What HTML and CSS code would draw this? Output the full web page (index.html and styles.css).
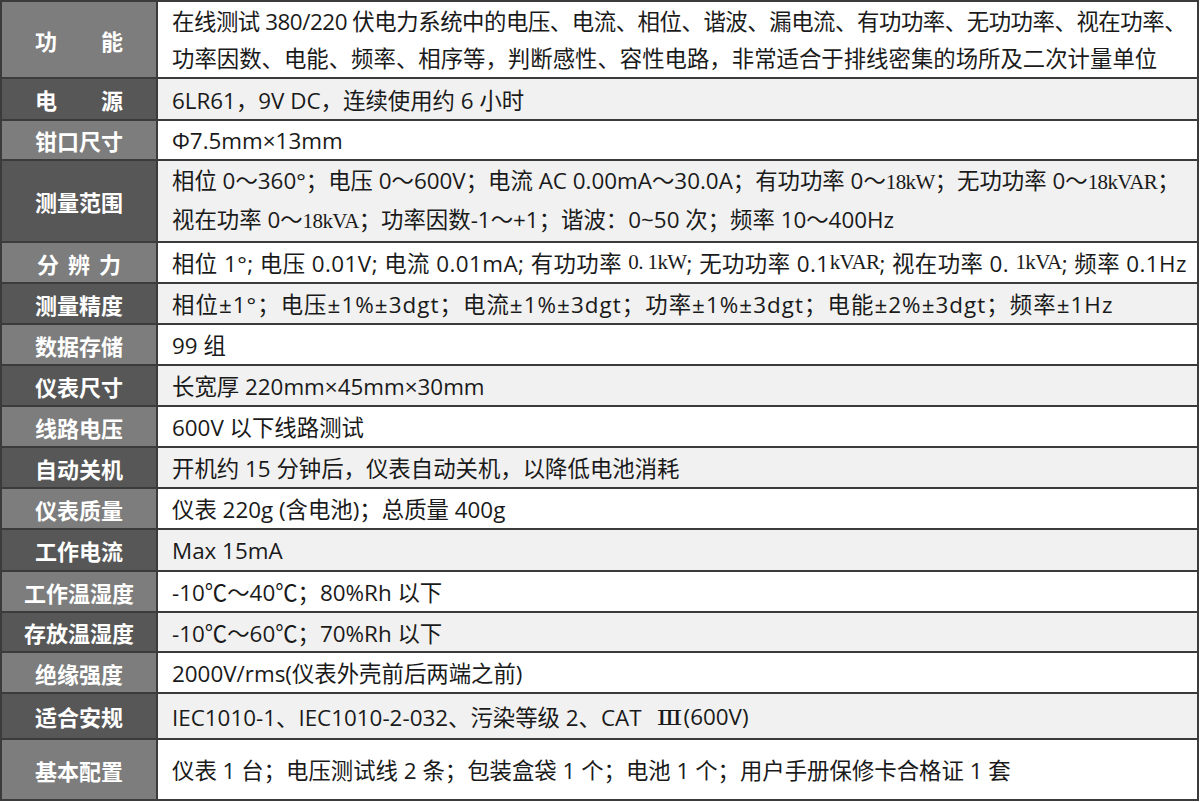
FILE: index.html
```html
<!DOCTYPE html>
<html lang="zh-CN">
<head>
<meta charset="utf-8">
<title>技术参数</title>
<link rel="stylesheet" href="styles.css">
</head>
<body>
<div class="sheet">
  <div class="lab odd h77">功　　能</div>
  <div class="val odd h77 two"><span class="tight">在线测试 380/220 伏电力系统中的电压、电流、相位、谐波、漏电流、有功功率、无功功率、视在功率、</span><br>功率因数、电能、频率、相序等，判断感性、容性电路，非常适合于排线密集的场所及二次计量单位</div>

  <div class="lab even h42">电　　源</div>
  <div class="val even h42">6LR61，9V DC，连续使用约 6 小时</div>

  <div class="lab odd h40">钳口尺寸</div>
  <div class="val odd h40">Φ7.5mm×13mm</div>

  <div class="lab even h82">测量范围</div>
  <div class="val even h82 two">相位 0～360°；电压 0～600V；电流 AC 0.00mA～30.0A；有功功率 0～<span class="sf">18kW</span>；无功功率 0～<span class="sf">18kVAR</span>；<br>视在功率 0～<span class="sf">18kVA</span>；功率因数-1～+1；谐波：0~50 次；频率 10～400Hz</div>

  <div class="lab odd h41 spaced">分 辨 力</div>
  <div class="val odd h41 loose">相位 1°; 电压 0.01V; 电流 0.01mA; 有功功率&nbsp;<span class="sf">0. 1kW</span>; 无功功率 0.1<span class="sf">kVAR</span>; 视在功率 0.&nbsp;<span class="sf">1kVA</span>; 频率 0.1Hz</div>

  <div class="lab even h41">测量精度</div>
  <div class="val even h41 looser">相位±1°；电压±1%±3dgt；电流±1%±3dgt；功率±1%±3dgt；电能±2%±3dgt；频率±1Hz</div>

  <div class="lab odd h41">数据存储</div>
  <div class="val odd h41">99 组</div>

  <div class="lab even h41">仪表尺寸</div>
  <div class="val even h41">长宽厚 220mm×45mm×30mm</div>

  <div class="lab odd h41">线路电压</div>
  <div class="val odd h41">600V 以下线路测试</div>

  <div class="lab even h41">自动关机</div>
  <div class="val even h41">开机约 15 分钟后，仪表自动关机，以降低电池消耗</div>

  <div class="lab odd h41">仪表质量</div>
  <div class="val odd h41">仪表 220g (含电池)；总质量 400g</div>

  <div class="lab even h42">工作电流</div>
  <div class="val even h42">Max 15mA</div>

  <div class="lab odd h41">工作温湿度</div>
  <div class="val odd h41">-10℃～40℃；80%Rh 以下</div>

  <div class="lab even h40">存放温湿度</div>
  <div class="val even h40">-10℃～60℃；70%Rh 以下</div>

  <div class="lab odd h41">绝缘强度</div>
  <div class="val odd h41">2000V/rms(仪表外壳前后两端之前)</div>

  <div class="lab even h46">适合安规</div>
  <div class="val even h46">IEC1010-1、IEC1010-2-032、污染等级 2、CAT<span class="roman"><span class="roman-glyph">Ⅲ</span></span>(600V)</div>

  <div class="lab odd h61">基本配置</div>
  <div class="val odd h61">仪表 1 台；电压测试线 2 条；包装盒袋 1 个；电池 1 个；用户手册保修卡合格证 1 套</div>
</div>
</body>
</html>
```

FILE: styles.css
```css
html, body {
  margin: 0;
  padding: 0;
  background: #ffffff;
}

.sheet {
  width: 1195px;
  display: grid;
  grid-template-columns: 154px 1fr;
  gap: 2px;
  padding: 2px;
  background: #3b3b3b;
  font-family: "Open Sans", "Noto Sans CJK SC", sans-serif;
}

.lab {
  display: flex;
  align-items: center;
  justify-content: center;
  color: #ffffff;
  font-family: "Noto Sans CJK SC", sans-serif;
  font-weight: 700;
  font-size: 22px;
  white-space: pre;
}

.lab.spaced {
  word-spacing: 4px;
}

.lab.odd { background: #7d7d7d; }
.lab.even { background: #575757; }

.val {
  display: flex;
  align-items: center;
  padding-left: 14px;
  color: #1a1a1a;
  font-size: 22.4px;
  white-space: nowrap;
}

.val.two {
  display: block;
  line-height: 37px;
  padding-top: 1px;
  box-sizing: border-box;
}

.val.loose { letter-spacing: 0.45px; }
.val.looser { letter-spacing: 1.05px; }

.tight { letter-spacing: -0.45px; }

.val.odd { background: #ffffff; }
.val.even { background: #f1f1f1; }

.sf {
  font-family: "Liberation Serif", "DejaVu Serif", serif;
  font-size: 21px;
  letter-spacing: -0.6px;
}

.roman {
  display: inline-block;
  width: 24px;
  margin-left: 16px;
  margin-right: 2px;
  text-align: center;
}

.roman-glyph {
  display: inline-block;
  font-family: "DejaVu Serif", serif;
  font-size: 20px;
  transform: scaleX(1.35);
}

.h40 { height: 38px; }
.h41 { height: 39px; }
.h42 { height: 40px; }
.h46 { height: 44px; }
.h61 { height: 59px; }
.h77 { height: 75px; }
.h82 { height: 80px; }
```
